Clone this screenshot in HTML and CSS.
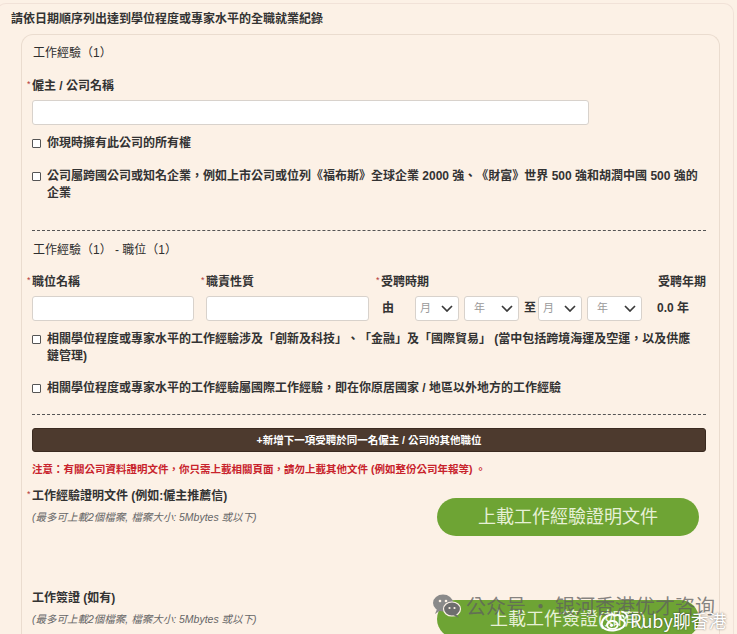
FILE: index.html
```
<!DOCTYPE html>
<html lang="zh-Hant">
<head>
<meta charset="utf-8">
<title>全職就業紀錄</title>
<link rel="stylesheet" href="styles.css">
</head>
<body>
<div class="panel">
  <div class="panel-title">請依日期順序列出達到學位程度或專家水平的全職就業紀錄</div>
  <div class="card">
    <div class="heading">工作經驗（1）</div>
    <div class="label label-employer"><span class="req">*</span>僱主 / 公司名稱</div>
    <div class="text-input wide"></div>
    <div class="check first"><span class="box"></span><span class="check-text">你現時擁有此公司的所有權</span></div>
    <div class="check gap16"><span class="box"></span><span class="check-text">公司屬跨國公司或知名企業，例如上市公司或位列《福布斯》全球企業 2000 強、《財富》世界 500 強和胡潤中國 500 強的企業</span></div>
    <div class="dashed dashed-1"></div>
    <div class="heading heading-2">工作經驗（1） - 職位（1）</div>
    <div class="position-grid">
      <div class="label"><span class="req">*</span>職位名稱</div>
      <div class="label"><span class="req">*</span>職責性質</div>
      <div class="label"><span class="req">*</span>受聘時期</div>
      <div class="label label-right">受聘年期</div>
      <div class="text-input"></div>
      <div class="text-input"></div>
      <div class="period">
        <span class="word word-from">由</span>
        <span class="select month"><span class="ph">月</span><svg class="chev" viewBox="0 0 12 7" width="12" height="7"><polyline points="1,1 6,6 11,1"/></svg></span>
        <span class="select year"><span class="ph">年</span><svg class="chev" viewBox="0 0 12 7" width="12" height="7"><polyline points="1,1 6,6 11,1"/></svg></span>
        <span class="word word-to">至</span>
        <span class="select month"><span class="ph">月</span><svg class="chev" viewBox="0 0 12 7" width="12" height="7"><polyline points="1,1 6,6 11,1"/></svg></span>
        <span class="select year"><span class="ph">年</span><svg class="chev" viewBox="0 0 12 7" width="12" height="7"><polyline points="1,1 6,6 11,1"/></svg></span>
      </div>
      <div class="years">0.0 年</div>
    </div>
    <div class="check first"><span class="box"></span><span class="check-text">相關學位程度或專家水平的工作經驗涉及「創新及科技」、「金融」及「國際貿易」 (當中包括跨境海運及空運，以及供應鏈管理)</span></div>
    <div class="check gap15"><span class="box"></span><span class="check-text">相關學位程度或專家水平的工作經驗屬國際工作經驗，即在你原居國家 / 地區以外地方的工作經驗</span></div>
    <div class="dashed dashed-2"></div>
    <div class="add-btn">+新增下一項受聘於同一名僱主 / 公司的其他職位</div>
    <div class="note">注意：有關公司資料證明文件，你只需上載相關頁面，請勿上載其他文件 (例如整份公司年報等) 。</div>
    <div class="upload-row">
      <div class="upload-info">
        <div class="upload-label"><span class="req">*</span>工作經驗證明文件 (例如:僱主推薦信)</div>
        <div class="hint">(最多可上載2個檔案, 檔案大小: 5Mbytes 或以下)</div>
      </div>
      <div class="green-btn">上載工作經驗證明文件</div>
    </div>
    <div class="upload-row second">
      <div class="upload-info">
        <div class="upload-label plain">工作簽證 (如有)</div>
        <div class="hint">(最多可上載2個檔案, 檔案大小: 5Mbytes 或以下)</div>
      </div>
      <div class="green-btn">上載工作簽證(如有)</div>
    </div>
  </div>
</div>

<div class="watermark">
  <div class="wm-line1">
    <svg class="wechat" viewBox="0 0 30 26" width="30" height="26">
      <ellipse cx="11" cy="10" rx="10" ry="8.5" fill="#8a8a8a"/>
      <path d="M5 16 L3 21 L9 17 Z" fill="#8a8a8a"/>
      <ellipse cx="20" cy="16" rx="8.5" ry="7" fill="#6e6e6e" stroke="#fcf1e6" stroke-width="1.2"/>
      <path d="M24 21 L27 25 L21 22 Z" fill="#6e6e6e"/>
      <circle cx="8" cy="8" r="1.3" fill="#fcf1e6"/>
      <circle cx="14" cy="8" r="1.3" fill="#fcf1e6"/>
      <circle cx="17.5" cy="15" r="1.1" fill="#fcf1e6"/>
      <circle cx="22.5" cy="15" r="1.1" fill="#fcf1e6"/>
    </svg>
    <span class="wm-text1">公众号 · 银河香港优才咨询</span>
  </div>
  <div class="wm-line2">
    <svg class="weibo" viewBox="0 0 34 26" width="30" height="23">
      <path d="M14 6 C6 7 1 13 2 18 C3 23 10 25 17 24 C25 23 29 19 28 15 C27 12 24 12 23 11 C24 8 22 6 18 7 C16 8 16 7 14 6 Z" fill="none" stroke="#fff" stroke-width="2.4"/>
      <ellipse cx="14" cy="18" rx="6" ry="4.5" fill="none" stroke="#fff" stroke-width="2.2"/>
      <circle cx="13" cy="18.5" r="1.8" fill="#fff"/>
      <path d="M24 3 C28 3 31 6 31 10" fill="none" stroke="#fff" stroke-width="2"/>
      <path d="M24 7 C26 7 27 8 27 10" fill="none" stroke="#fff" stroke-width="1.8"/>
    </svg>
    <span class="wm-text2">Ruby聊香港</span>
  </div>
</div>
</body>
</html>
```

FILE: styles.css
```
* {
  box-sizing: border-box;
}

html, body {
  margin: 0;
  padding: 0;
  background: #fcf1e6;
  overflow: hidden;
}

body {
  position: relative;
  height: 634px;
  font-family: "Liberation Sans", "Noto Sans CJK TC", sans-serif;
  font-size: 12px;
  line-height: 17px;
  color: #333;
  text-spacing-trim: space-all;
}

.panel {
  margin: 3px 3px 0 -4px;
  padding: 7px 0 0 14px;
  border: 1px solid #f1e2d8;
  border-bottom: none;
  border-radius: 10px 10px 0 0;
  background: #fcf1e6;
  height: 640px;
}

.panel-title {
  font-weight: bold;
  color: #333;
  height: 17px;
}

.card {
  margin: 6px 13px 0 10px;
  padding: 10px 13px 0 10px;
  border: 1px solid #eadccf;
  border-bottom: none;
  border-radius: 12px 12px 0 0;
  height: 620px;
}

.heading {
  color: #2e2e2e;
  padding-left: 1px;
}

.heading-2 {
  margin-top: 11px;
}

.label {
  font-weight: bold;
  color: #333;
}

.label-employer {
  margin-top: 16px;
}

.req {
  display: inline-block;
  margin-left: -5px;
  width: 5px;
  font-size: 9px;
  font-weight: normal;
  color: #b43a3a;
  vertical-align: top;
  line-height: 13px;
}

.text-input {
  height: 25px;
  background: #fff;
  border: 1px solid #d8d2cc;
  border-radius: 3px;
}

.text-input.wide {
  width: 557px;
  margin-top: 5px;
}

.check {
  display: flex;
  align-items: flex-start;
  font-weight: bold;
  color: #333;
}

.check.first {
  margin-top: 10px;
}

.check.gap16 {
  margin-top: 16px;
}

.check.gap15 {
  margin-top: 15px;
}

.box {
  flex: none;
  width: 9px;
  height: 9px;
  margin-top: 4px;
  margin-right: 6px;
  border: 1px solid #555;
  border-radius: 1px;
  background: #fff;
}

.check-text {
  max-width: 651px;
}

.dashed {
  border-top: 1px dashed #555;
}

.dashed-1 {
  margin-top: 28px;
}

.dashed-2 {
  margin-top: 17px;
}

.position-grid {
  margin-top: 15px;
  display: grid;
  grid-template-columns: 162px 163px 1fr 49px;
  column-gap: 12px;
  row-gap: 5px;
  align-items: center;
}

.label-right {
  text-align: right;
}

.period {
  display: flex;
  align-items: center;
  height: 25px;
}

.word {
  font-weight: bold;
  color: #333;
}

.word-from {
  margin-left: 1px;
  margin-right: 21px;
}

.word-to {
  margin: 0 2px 0 5px;
}

.select {
  position: relative;
  display: flex;
  align-items: center;
  height: 25px;
  background: #fff;
  border: 1px solid #d8d2cc;
  border-radius: 3px;
  color: #9a9a9a;
  font-weight: normal;
  font-size: 11px;
}

.select.month {
  width: 44px;
  padding-left: 4px;
}

.select.year {
  width: 55px;
  margin-left: 5px;
  padding-left: 9px;
}

.chev {
  margin-left: auto;
  margin-right: 5px;
  fill: none;
  stroke: #3a3a3a;
  stroke-width: 1.7;
}

.years {
  font-weight: bold;
  color: #333;
}

.add-btn {
  margin-top: 13px;
  height: 24px;
  line-height: 22px;
  background: #4d3a2e;
  border: 1px solid #3a2a20;
  border-radius: 3px;
  color: #fff;
  font-weight: bold;
  font-size: 10.5px;
  text-align: center;
}

.note {
  margin-top: 9px;
  color: #c8232c;
  font-weight: bold;
  font-size: 10.5px;
}

.upload-row {
  display: flex;
  justify-content: space-between;
  align-items: flex-start;
  margin-top: 10px;
}

.upload-row.second {
  margin-top: 54px;
}

.upload-label {
  font-weight: bold;
  color: #333;
}

.hint {
  margin-top: 4px;
  font-style: italic;
  font-size: 10.5px;
  color: #666;
}

.green-btn {
  margin-top: 10px;
  margin-right: 7px;
  width: 262px;
  height: 38px;
  line-height: 38px;
  border-radius: 19px;
  background: #6ea434;
  color: #e6f0d6;
  font-size: 18px;
  text-align: center;
}

.watermark {
  position: absolute;
  left: 432px;
  top: 593px;
  pointer-events: none;
}

.wm-line1 {
  display: flex;
  align-items: center;
  gap: 4px;
}

.wm-text1 {
  font-family: "Noto Sans CJK SC", sans-serif;
  font-size: 20px;
  line-height: 26px;
  color: rgba(95, 95, 95, 0.75);
}

.wm-line2 {
  position: absolute;
  left: 168px;
  top: 14px;
  display: flex;
  align-items: center;
  white-space: nowrap;
}

.wm-text2 {
  font-family: "Noto Sans CJK SC", sans-serif;
  font-size: 18px;
  line-height: 26px;
  color: #fff;
  text-shadow: 0 0 2px rgba(0, 0, 0, 0.55);
}
```
